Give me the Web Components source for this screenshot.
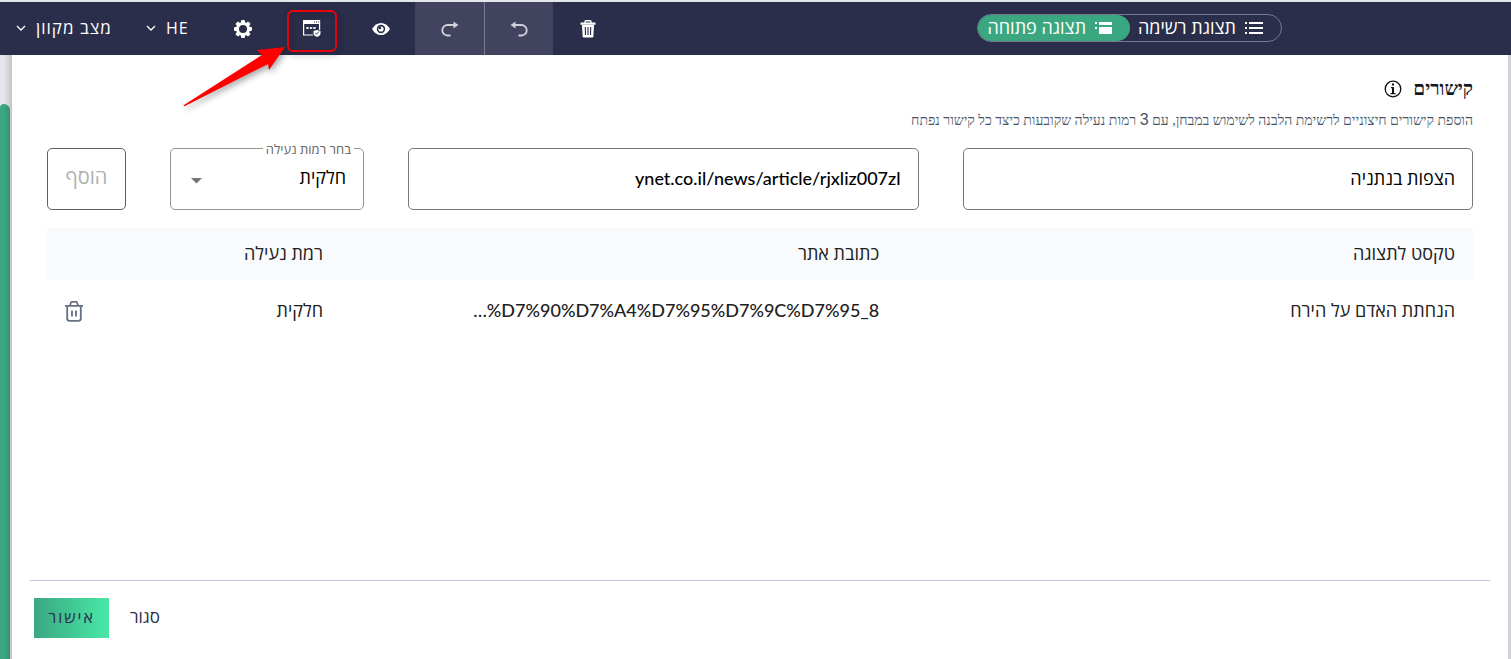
<!DOCTYPE html>
<html lang="he" dir="rtl">
<head>
<meta charset="utf-8">
<title>קישורים</title>
<style>
html, body { margin: 0; min-height: 100%; }
body { min-height: 100vh; display: flex; background: #e9e9ee; font-family: "Open Sans", "Liberation Sans", sans-serif; color: #212121; }
</style>
</head>
<body>
<app-shell>
  <tool-bar slot="bar"></tool-bar>
  <links-panel></links-panel>
</app-shell>

<script>
const define = (name, html) => {
  const template = document.createElement('template');
  template.innerHTML = html;
  customElements.define(name, class extends HTMLElement {
    constructor() {
      super();
      this.attachShadow({ mode: 'open' }).append(template.content.cloneNode(true));
    }
  });
};

define('app-shell', `
<style>
:host { flex: 1; display: flex; flex-direction: column; min-width: 0; border-top: 2px solid #e4e6ea; box-sizing: border-box; }
.body { flex: 1; display: flex; direction: ltr; }
.edge { width: 12px; display: flex; padding-top: 49px; box-sizing: border-box; background: linear-gradient(90deg, #e6e6ec 30%, #c4c4c8); }
.edge i { width: 10px; background: linear-gradient(90deg, #3ba781 40%, #35926f); border-radius: 4px 6px 0 0; }
main { flex: 1; min-width: 0; display: flex; direction: rtl; background: #fff; }
.end { width: 3px; background: #d2d2d8; }
</style>
<slot name="bar"></slot>
<div class="body"><div class="edge"><i></i></div><main><slot></slot></main><div class="end"></div></div>`);

define('tool-button', `
<style>
:host { display: flex; width: 69px; position: relative; box-sizing: border-box; }
button { flex: 1; display: flex; align-items: center; justify-content: center; border: 0; padding: 0; background: none; color: #fff; }
:host([muted]) { background: #42445f; }
:host([muted]) button { color: #d0d1d9; }
:host([divided]) { border-left: 1px solid #7b7d92; }
</style>
<button type="button"><slot></slot></button>`);

define('call-out', `
<style>
:host { position: absolute; left: -94px; top: 5px; width: 160px; height: 110px; pointer-events: none; z-index: 2; filter: drop-shadow(2px 3px 3px rgba(0,0,0,.35)); }
</style>
<svg width="160" height="110" viewBox="0 0 160 110" aria-hidden="true">
<rect x="105" y="4" width="48" height="40" rx="5" fill="none" stroke="#e8000b" stroke-width="2"/>
<path d="M1 98 L79 48 L74 43 L102 40 L86 63 L85 57 L2 99 Q0 100 1 98Z" fill="#f00"/>
</svg>`);

define('view-switch', `
<style>
:host { display: flex; direction: rtl; height: 28px; box-sizing: border-box; border: 1px solid #777990; border-radius: 14px; }
button { display: flex; align-items: center; gap: 9px; border: 0; padding: 0 18px 2px 8px; background: none; color: #fff; font: 18px/24px "Open Sans", "Liberation Sans", sans-serif; border-radius: 14px; white-space: nowrap; }
button.on { background: #3ba781; padding-left: 9px; }
svg { position: relative; top: 1px; }
</style>
<button type="button"><svg width="18" height="12" viewBox="0 0 18 12" fill="currentColor"><path d="M4 0h14v2H4zM4 5h14v2H4zM4 10h14v2H4zM0 0h2v2H0zM0 5h2v2H0zM0 10h2v2H0z"/></svg>תצוגת רשימה</button>
<button type="button" class="on" aria-pressed="true"><svg width="17" height="12" viewBox="0 0 17 12" fill="currentColor"><path d="M4 0h13v3H4zM4 5h13v7H4zM0 0h2v2H0zM0 5h2v2H0z"/></svg>תצוגה פתוחה</button>`);

define('tool-bar', `
<style>
:host { display: flex; direction: ltr; height: 53px; background: #2b2e4a; color: #fff; position: relative; z-index: 1; }
.menu { display: flex; align-items: center; gap: 10px; border: 0; background: none; color: #fff; padding: 0 0 2px 16px; font: 17px/24px "Open Sans", "Liberation Sans", sans-serif; letter-spacing: 1px; white-space: nowrap; }
.mode { width: 130px; }
.lang { width: 78px; font-size: 16px; }
.grow { flex: 1; }
view-switch { align-self: center; margin: 0 229px 2px 16px; }
</style>
<button class="menu mode" type="button"><svg width="10" height="6" viewBox="0 0 10 6" fill="none" stroke="currentColor" stroke-width="1.3"><path d="M1 1l4 4 4-4"/></svg><span dir="rtl">מצב מקוון</span></button>
<button class="menu lang" type="button"><svg width="10" height="6" viewBox="0 0 10 6" fill="none" stroke="currentColor" stroke-width="1.3"><path d="M1 1l4 4 4-4"/></svg><span>HE</span></button>
<tool-button><svg width="18" height="18" viewBox="0 0 18 18" aria-label="הגדרות"><g fill="#fff"><g><rect x="7" y="0" width="4" height="18" rx="1"/><rect x="0" y="7" width="18" height="4" rx="1"/></g><g transform="rotate(45 9 9)"><rect x="7" y="0" width="4" height="18" rx="1"/><rect x="0" y="7" width="18" height="4" rx="1"/></g><circle cx="9" cy="9" r="7"/></g><circle cx="9" cy="9" r="4" fill="#2b2e4a"/></svg></tool-button>
<tool-button><svg width="18" height="17" viewBox="0 0 18 17" aria-label="קישורים"><path d="M.6 1h16v14H.6z" fill="none" stroke="#fff" stroke-width="1.2"/><path d="M0 0h17v4H0z" fill="#fff"/><path d="M11 2h1m1 0h1m1 0h1" stroke="#2b2e4a"/><path d="M3.500 9l.7-2 .5 2 .8-2M7 9l.7-2 .5 2 .8-2M10.500 9l.7-2 .5 2 .8-2" fill="none" stroke="#fff" stroke-width=".9"/><path d="M10 10h8v7h-8z" fill="#2b2e4a"/><path d="M14 10l3.500 1v3q-.5 2-3.500 3-3-1-3.500-3v-3z" fill="#fff"/><path d="M12.300 13l1.200 1.200 2.500-2.700" fill="none" stroke="#2b2e4a" stroke-width="1"/></svg><call-out></call-out></tool-button>
<tool-button><svg width="18" height="12" viewBox="0 0 18 12" aria-label="תצוגה מקדימה"><path d="M0 6Q3.500 0 9 0t9 6q-3.500 6-9 6T0 6z" fill="#fff"/><circle cx="9" cy="6" r="4.200" fill="#2b2e4a"/><circle cx="9" cy="6" r="2.600" fill="#fff"/><circle cx="8" cy="5" r="1.200" fill="#2b2e4a"/></svg></tool-button>
<tool-button muted><svg width="18" height="16" viewBox="0 0 18 16" fill="none" stroke="currentColor" stroke-width="1.800" aria-label="בצע שוב"><path d="M16 4H6.500a5 5 0 0 0 0 10.500H9.500"/><path d="M12.500 .5L17.500 4 12.500 7.500z" fill="currentColor" stroke="none"/></svg></tool-button>
<tool-button muted divided><svg width="18" height="16" viewBox="0 0 18 16" fill="none" stroke="currentColor" stroke-width="1.800" aria-label="בטל"><path d="M2 4h9.500a5 5 0 0 1 0 10.500H8.500"/><path d="M5.500 .5L.5 4 5.500 7.500z" fill="currentColor" stroke="none"/></svg></tool-button>
<tool-button><svg width="16" height="18" viewBox="0 0 16 18" aria-label="מחק"><path d="M5 3V1.500Q5 .7 6 .7h4q1 0 1 .8V3" fill="none" stroke="#fff" stroke-width="1.400"/><path d="M.5 2.500h15v2.200H.5zM2 5h12l-.6 11.500q-.1 1-1.200 1H3.800q-1.100 0-1.200-1z" fill="#fff"/><path d="M5.300 7l.2 8M8 7v8M10.700 7l-.2 8" stroke="#2b2e4a" stroke-width="1.100"/></svg></tool-button>
<div class="grow"></div>
<view-switch></view-switch>`);

define('links-form', `
<style>
:host { display: grid; grid-template-columns: 1fr 1fr 194px 79px; gap: 44px; height: 62px; }
input, select, button { box-sizing: border-box; width: 100%; height: 62px; margin: 0; border: 1px solid #777; border-radius: 5px; background: #fff; color: #000; padding: 0 17px 2px; font: 18px/24px "Open Sans", "Liberation Sans", sans-serif; }
input.url { font: 500 18px/24px Lato, sans-serif; direction: ltr; text-align: right; }
.pick { position: relative; }
select { appearance: none; border-color: #949494; padding-bottom: 4px; }
.pick label { position: absolute; top: -7px; right: 10px; padding: 0 3px; background: #fff; color: #666; font-size: 13px; line-height: 16px; }
.pick svg { position: absolute; left: 21px; top: 30px; }
button { padding: 0 0 4px; font-size: 20px; color: #b0b0b0; border-color: #606060; }
</style>
<input aria-label="טקסט לתצוגה" value="הצפות בנתניה">
<input class="url" aria-label="כתובת אתר" value="ynet.co.il/news/article/rjxliz007zl">
<div class="pick"><select id="level"><option>חלקית</option></select><label for="level">בחר רמות נעילה</label><svg width="11" height="6" viewBox="0 0 11 6"><path d="M0 0h11L5.500 5.500z" fill="#757575"/></svg></div>
<button type="button" disabled>הוסף</button>`);

define('links-table', `
<style>
:host { display: block; margin-top: 18px; }
table { width: 100%; table-layout: fixed; border-collapse: collapse; font-size: 18px; line-height: 24px; }
th, td { box-sizing: border-box; font-weight: 400; text-align: right; padding: 0 18px 2px; white-space: nowrap; }
th { height: 52px; background: #f8fafc; }
td { height: 62px; }
.site { width: 39%; }
.lock { width: 200px; }
.act { width: 94px; }
td.url { font: 500 18px/24px Lato, sans-serif; direction: ltr; }
td.end { text-align: left; }
button { border: 0; background: none; padding: 0; display: inline-flex; vertical-align: middle; }
</style>
<table>
<thead><tr><th>טקסט לתצוגה</th><th class="site">כתובת אתר</th><th class="lock">רמת נעילה</th><th class="act"></th></tr></thead>
<tbody><tr><td>הנחתת האדם על הירח</td><td class="url">…%D7%90%D7%A4%D7%95%D7%9C%D7%95_8</td><td>חלקית</td>
<td class="end"><button type="button" aria-label="מחק קישור"><svg width="18" height="21" viewBox="0 0 18 21" fill="none" stroke="#667085" stroke-width="1.800"><path d="M0 4.800h18M5 4.500L6 1.500q.2-.6 1-.6h4q.8 0 1 .6l1 3M2.200 5v12.500q0 2.300 2.300 2.300h9q2.300 0 2.300-2.300V5M7 9.500v6M11 9.500v6"/></svg></button></td></tr></tbody>
</table>`);

define('links-panel', `
<style>
:host { flex: 1; min-width: 0; display: flex; flex-direction: column; }
section { flex: 1; padding: 21px 35px 0; }
h1 { display: flex; align-items: center; gap: 11px; margin: 0; font: 700 19px/26px "Liberation Serif", serif; color: #101828; }
p { margin: 9px 0 18px; font: 14px/18px "Liberation Serif", serif; color: #475467; }
p span { font-family: "Liberation Sans", sans-serif; font-size: 16px; }
footer { display: flex; direction: ltr; align-items: center; gap: 21px; margin: 0 18px; padding: 17px 4px 21px; border-top: 1px solid #c3c4d6; }
footer button { border: 0; padding: 0 0 2px; height: 40px; background: none; color: #2b2e4a; font: 17px/24px "Open Sans", "Liberation Sans", sans-serif; }
footer .ok { width: 75px; background: linear-gradient(90deg, #3ba781, #48e8a8); font-size: 16px; letter-spacing: 2px; }
</style>
<section>
<h1>קישורים<svg width="18" height="18" viewBox="0 0 18 18" aria-hidden="true"><circle cx="9" cy="9" r="7.800" fill="none" stroke="#111" stroke-width="1.300"/><path d="M8 3.500h2v2H8zM7 7h3v6h1.500v1.200h-5V13H8V8.200H7z" fill="#111"/></svg></h1>
<p>הוספת קישורים חיצוניים לרשימת הלבנה לשימוש במבחן, עם <span>3</span> רמות נעילה שקובעות כיצד כל קישור נפתח</p>
<links-form></links-form>
<links-table></links-table>
</section>
<footer><button class="ok" type="button">אישור</button><button type="button">סגור</button></footer>`);
</script>
</body>
</html>
